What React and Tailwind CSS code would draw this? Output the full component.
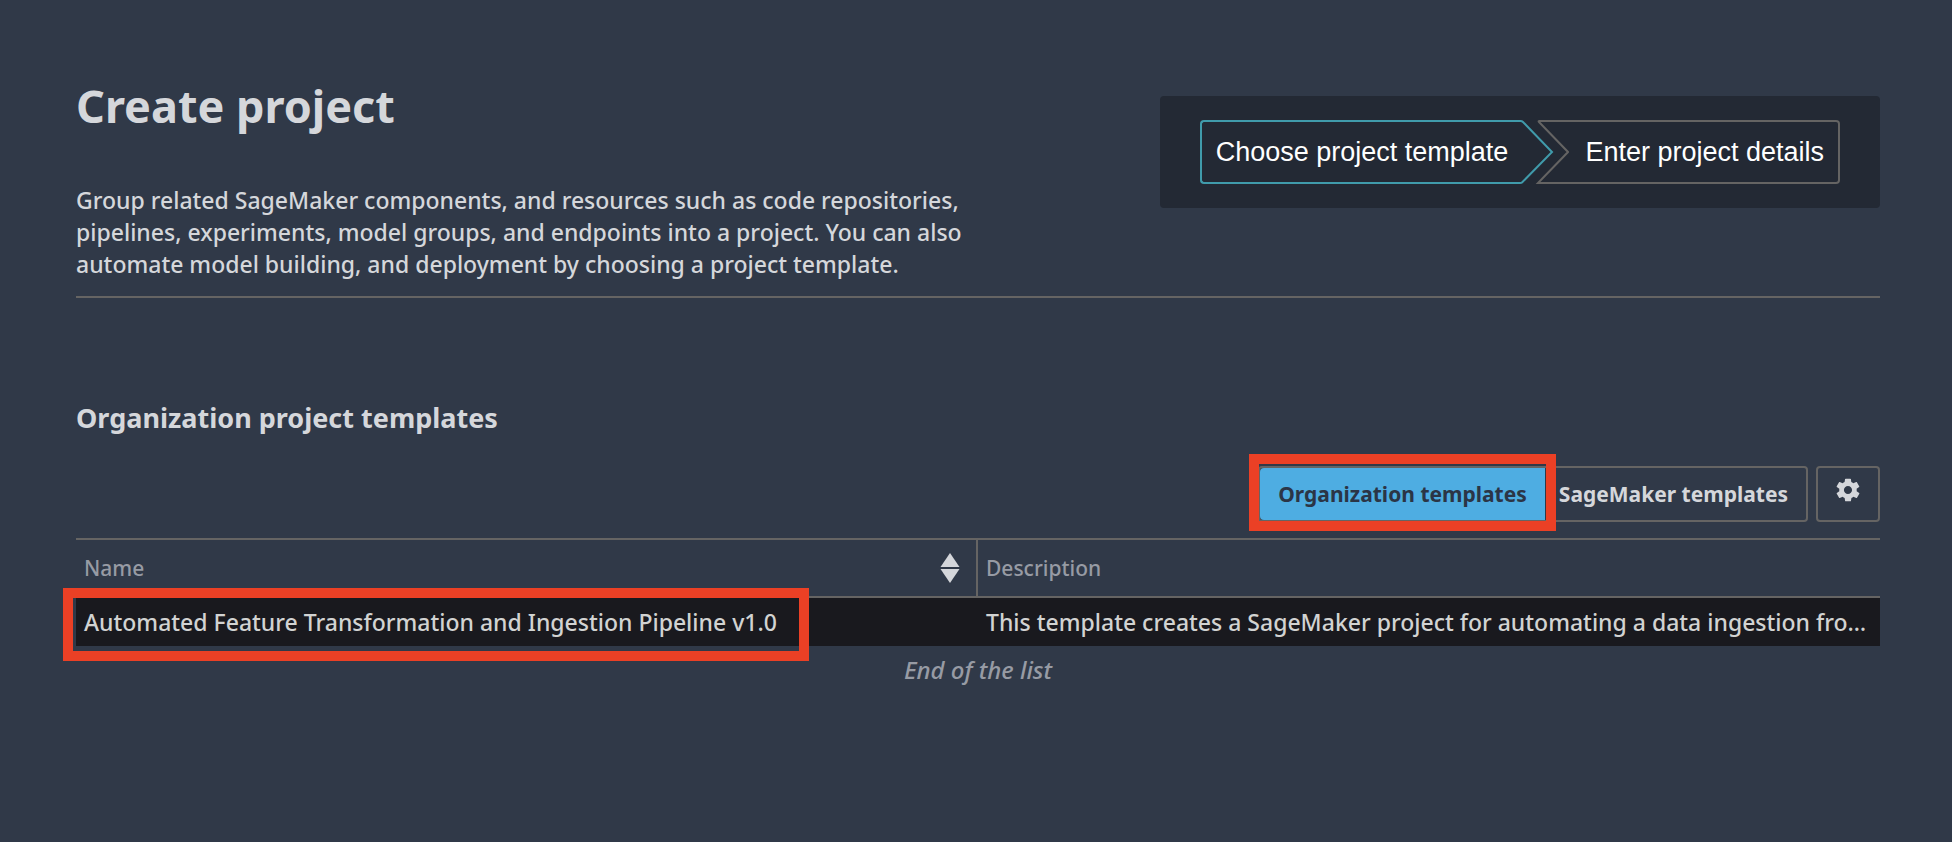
import { IoMdSettings } from "react-icons/io";

const templates = [
  {
    name: "Automated Feature Transformation and Ingestion Pipeline v1.0",
    description: "This template creates a SageMaker project for automating a data ingestion fro…",
  },
];

function Stepper() {
  return (
    <nav aria-label="Steps" className="rounded-sm bg-[#232934] px-10 py-6">
      <ol className="flex h-16 font-['Liberation_Sans',sans-serif] text-[27px] text-white">
        <li className="flex items-center rounded-l-sm border-y-2 border-l-2 border-[#409bab] pr-3 pl-3.5 whitespace-nowrap">
          Choose project template
        </li>
        <li aria-hidden="true">
          <svg width="49" height="64" viewBox="0 0 49 64" fill="none" strokeWidth="2">
            <path d="M0 1H0.500Q2 1 3 2L32 32L2 62.500Q1.500 63 0 63" stroke="#409bab" />
            <path d="M49 1H19.500Q18 1 19 2L48 32L18 63H49" stroke="#656463" />
          </svg>
        </li>
        <li className="flex items-center rounded-r-sm border-y-2 border-r-2 border-[#656463] pr-3.5 pl-4 whitespace-nowrap">
          Enter project details
        </li>
      </ol>
    </nav>
  );
}

function SortIcon() {
  return (
    <svg width="20" height="32" viewBox="0 0 20 32" fill="#d5d7db">
      <path d="M10 1L19.500 15H0.500Z" />
      <path d="M10 31L19.500 17H0.500Z" />
    </svg>
  );
}

function Highlight({ className }) {
  return <span aria-hidden="true" className={`pointer-events-none absolute border-10 border-[#eb4025] ${className}`} />;
}

export default function App() {
  return (
    <main className="min-h-screen bg-[#303948] pt-20 pr-[72px] pl-[76px] font-['Noto_Sans',sans-serif] text-[23px] leading-8 font-medium text-[#d5d7db]">
      <header className="flex items-start justify-between border-b-2 border-[#656463] pb-4">
        <div className="max-w-[900px]">
          <h1 className="mb-13 text-[45px] leading-[52px] font-bold">Create project</h1>
          <p>
            Group related SageMaker components, and resources such as code repositories,
            <br />
            pipelines, experiments, model groups, and endpoints into a project. You can also
            <br />
            automate model building, and deployment by choosing a project template.
          </p>
        </div>
        <div className="pt-4">
          <Stepper />
        </div>
      </header>

      <section className="pt-[104px]">
        <h2 className="text-[27px] font-bold">Organization project templates</h2>
        <div className="mt-8 flex justify-end gap-2 pb-4 text-[21px] font-bold">
          <div className="relative flex h-14 rounded-sm border-2 border-[#656463]">
            <button type="button" className="rounded-l-sm bg-[#4eade2] px-[18px] text-[#2b3546]">
              Organization templates
            </button>
            <button type="button" className="pr-[18px] pl-3.5">
              SageMaker templates
            </button>
            <Highlight className="-top-3.5 -left-[11px] h-[77px] w-[307px]" />
          </div>
          <button
            type="button"
            aria-label="Settings"
            className="flex h-14 w-16 justify-center rounded-sm border-2 border-[#656463] pt-2"
          >
            <IoMdSettings size={28} />
          </button>
        </div>

        <table className="w-full table-fixed border-separate border-spacing-0 text-left">
          <thead>
            <tr className="h-15 text-[21px] text-[#979ba4]">
              <th scope="col" className="border-y-2 border-r-2 border-[#656463] pr-4 pl-2 font-medium">
                <div className="flex items-center justify-between">
                  Name
                  <SortIcon />
                </div>
              </th>
              <th scope="col" className="border-y-2 border-[#656463] pl-2 font-medium">
                Description
              </th>
            </tr>
          </thead>
          <tbody>
            {templates.map((template) => (
              <tr key={template.name} className="h-12 bg-[#19191e] text-[#d2d3d2]">
                <td className="relative pl-2 whitespace-nowrap">
                  {template.name}
                  <Highlight className="-top-2.5 -left-[13px] h-[73px] w-[746px]" />
                </td>
                <td className="pl-2 whitespace-nowrap">{template.description}</td>
              </tr>
            ))}
          </tbody>
        </table>
        <p className="pt-2 text-center text-[24px] text-[#979ba4] italic">End of the list</p>
      </section>
    </main>
  );
}
